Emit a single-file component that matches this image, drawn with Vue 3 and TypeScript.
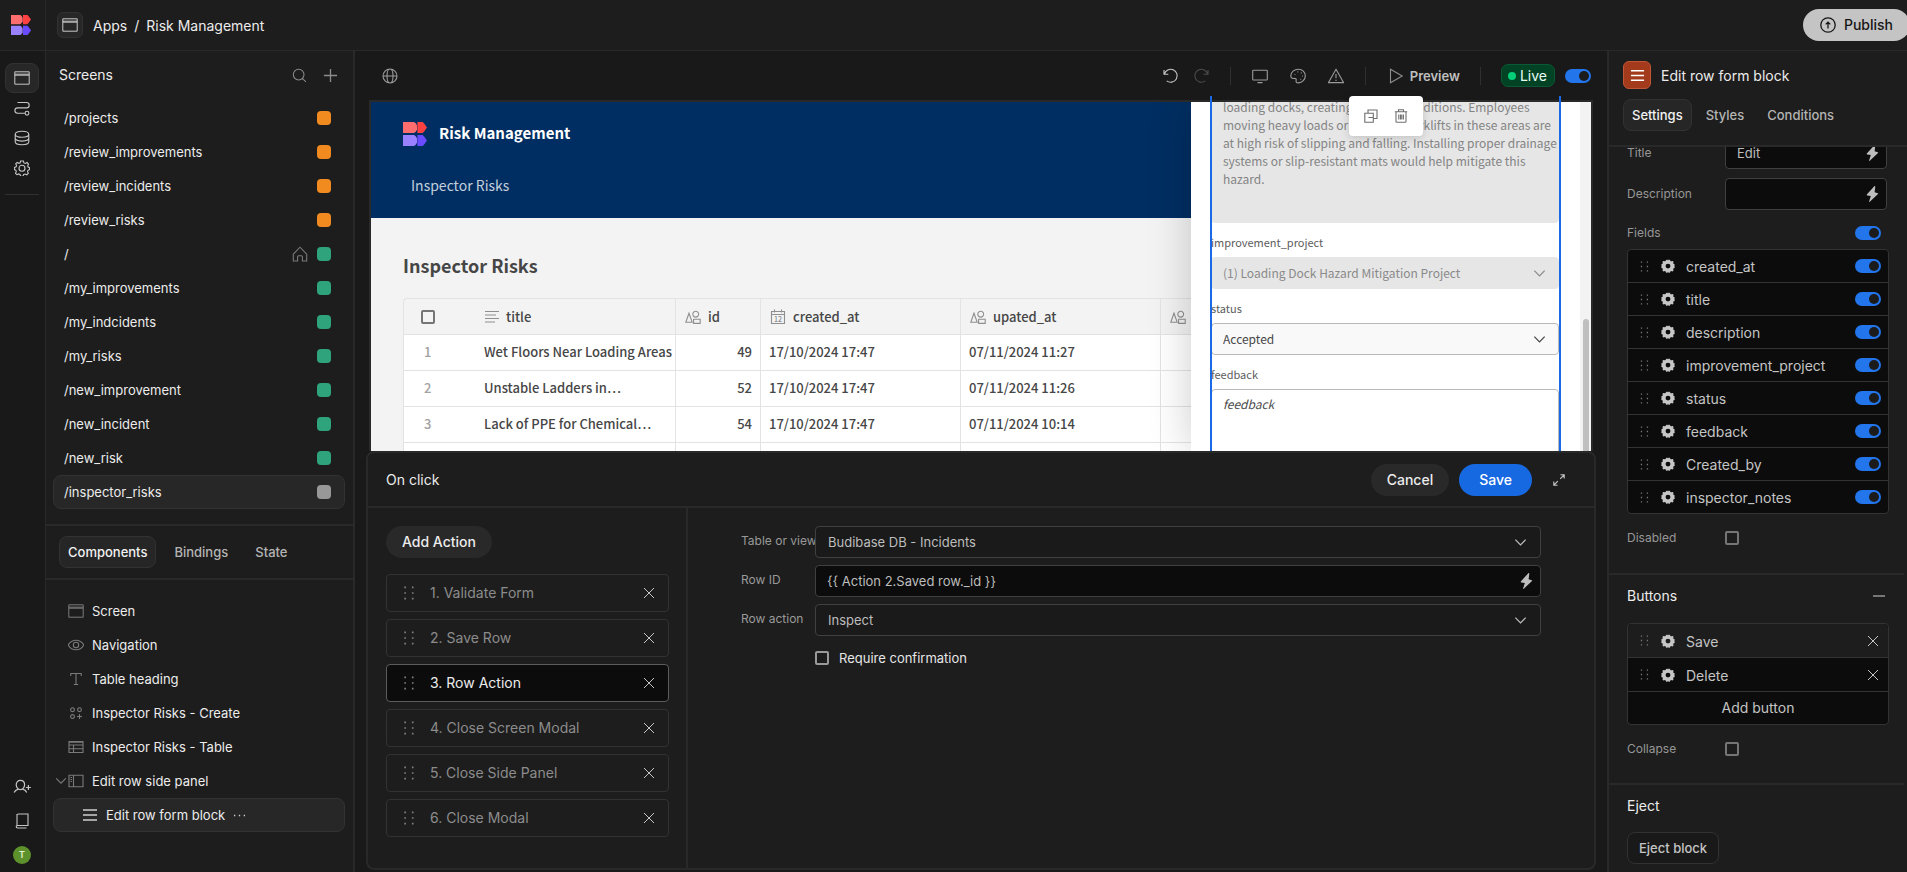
<script setup lang="ts">
import { h, ref, type FunctionalComponent } from 'vue'

interface Glyph {
  box: number
  d: string
  fill?: boolean
  weight?: number
}

const glyphs: Record<string, Glyph> = {
  window: { box: 16, d: 'M.8 1.8h14.4v12.4H.8zM.8 4.2h14.4M.8 5.2h14.4', weight: 1 },
  flow: { box: 16, d: 'M3.5 2.5h9a2.6 2.6 0 0 1 0 5.4H3.6a2.6 2.6 0 0 0 0 5.4h7.2M14.9 13.2a1.9 1.9 0 1 1-3.8 0a1.9 1.9 0 1 1 3.8 0' },
  data: { box: 16, d: 'M1.2 4.2c0-1.8 3-3 6.8-3s6.8 1.2 6.8 3-3 3-6.8 3-6.8-1.2-6.8-3zM1.2 4.2v3.9c0 1.8 3 3 6.8 3s6.8-1.2 6.8-3V4.2M1.2 8.1v3.7c0 1.8 3 3 6.8 3s6.8-1.2 6.8-3V8.1' },
  settings: { box: 16, d: 'M6.6 1h2.8l.5 1.9 1.5.6 1.7-1 1.4 1.5-.8 1.8.4 1.2 1.5.7v1.9l-1.6.7-.5 1.3.8 1.7-1.5 1.5-1.7-.8-1.4.5-.7 1.7H6.6l-.6-1.7-1.4-.6-1.7.8-1.4-1.4.8-1.8-.5-1.3L.4 9.6V7.5l1.7-.7.5-1.2-.9-1.8 1.5-1.4 1.7.9 1.3-.5zM11 8.2a3 3 0 1 1-6 0a3 3 0 1 1 6 0' },
  cog: { box: 16, fill: true, d: 'M6.3.8h1.2l.5.9.5-.9h1.6l.8 1.8h.8l1.6-.4 1 1-.3 1.7.2.5 1.5.8v1.3l-.9.5.9.6v1.4l-1.5.8-.3.7.4 1.6-1.1 1.1-1.7-.4-.6.2-.8 1.6H8.600L8 14.7l-.6.9H6l-.9-1.6-.6-.2-1.7.4-1.1-1.1.4-1.6-.3-.7L.3 10V8.600L1.2 8l-.9-.5V6.200l1.5-.8.2-.5L1.7 3.200l1-1 1.7.4.7-.2zM8 5.300a2.8 2.8 0 1 0 0 5.6a2.8 2.8 0 1 0 0-5.600z' },
  search: { box: 16, d: 'M12.8 7a5.700 5.700 0 1 1-11.400 0a5.700 5.700 0 1 1 11.400 0M11.200 11.200l3.600 3.600' },
  plus: { box: 16, d: 'M8 1v14M1 8h14', weight: 1.4 },
  home: { box: 16, d: 'M1.3 8.2 8 1.2l6.7 7V15h-4.300v-4.300a1 1 0 0 0-1-1H6.600a1 1 0 0 0-1 1V15H1.300z' },
  eye: { box: 16, d: 'M.2 8C2 4.800 4.800 3.200 8 3.200S14 4.800 15.800 8C14 11.200 11.200 12.800 8 12.800S2 11.200.2 8zM10.700 8a2.700 2.700 0 1 1-5.400 0a2.700 2.700 0 1 1 5.400 0' },
  heading: { box: 16, d: 'M2.8 5V2.500h10.400V5M8 2.500v11M5.800 13.500h4.400' },
  blocks: { box: 16, d: 'M6.400 4.700a1.900 1.900 0 1 1-3.800 0a1.900 1.900 0 1 1 3.800 0M13.400 4.700a1.900 1.900 0 1 1-3.800 0a1.900 1.900 0 1 1 3.800 0M6.400 11.500a1.900 1.900 0 1 1-3.800 0a1.900 1.900 0 1 1 3.800 0M11.500 9v5M9 11.500h5' },
  table: { box: 16, d: 'M1 2.500h14v11H1zM1 6h14M1 9.700h14M5.500 6v7.500M1 3.300h14' },
  sidePanel: { box: 16, d: 'M1 2.200h14v11.600H1zM5.500 2.200v11.600M2.500 4.500h1.500M2.500 6.500h1.500M2.500 8.500h1.500' },
  lines: { box: 16, d: 'M1 3h14M1 8h14M1 13h14', weight: 1.5 },
  chevron: { box: 16, d: 'M2.500 5 8 10.500 13.500 5', weight: 1.3 },
  dots: { box: 16, d: 'M1.200 7.200h1.600v1.600H1.200zM7.200 7.200h1.600v1.600H7.200zM13.200 7.200h1.600v1.600h-1.600z', fill: true },
  invite: { box: 18, d: 'M11.600 6.800c0 2.600-1.900 4.800-4.200 4.800S3.200 9.400 3.200 6.800 5 2.300 7.400 2.300s4.200 1.900 4.200 4.500zM5.300 11.200c-2.200.6-3.500 1.600-4.200 3.300M9.600 11.200c2.200.6 3.400 1.600 4.100 3.300M15.400 7v5M12.900 9.500h5', weight: 1.2 },
  book: { box: 16, d: 'M3 13V2.500A1.500 1.500 0 0 1 4.500 1H14v11.500H3.500a1.200 1.200 0 0 0 0 2.500h9M3 1v12' },
  globe: { box: 16, d: 'M15 8a7 7 0 1 1-14 0a7 7 0 1 1 14 0M11 8c0 4-1.300 7-3 7s-3-3-3-7 1.300-7 3-7 3 3 3 7M1 8h14' },
  undo: { box: 16, d: 'M1 2v4.200h4.300M1.400 6.100A6.500 6.500 0 1 1 3.700 12.900' },
  redo: { box: 16, d: 'M15 2v4.200h-4.300M14.600 6.100A6.500 6.500 0 1 0 12.300 12.900' },
  monitor: { box: 16, d: 'M1.500 2.200h13a.8.8 0 0 1 .8.800v8.200a.8.8 0 0 1-.8.800h-13a.8.8 0 0 1-.8-.8V3a.8.8 0 0 1 .8-.8zM5.500 14.600h5' },
  palette: { box: 16, d: 'M8.500 1.200C4.300 1.200.8 4.300.8 7.800c0 1.800 1.200 3 2.700 2.700 2-.4 3.300.4 2.600 2.200-.4 1.300.5 2.300 2.300 2.200 3.800-.2 6.900-3.300 6.900-7.100s-3-6.600-6.800-6.600zM5 6.200v.9M7.400 3.900h.9M10.800 4.900h.9M12.100 8h.9M10.300 11.200h.9' },
  warning: { box: 16, d: 'M8 1.300 15.500 14.600H.5zM8 6v4.300M8 11.800v1.300' },
  play: { box: 16, d: 'M2.500 1.300 14.200 8 2.500 14.700z' },
  publish: { box: 16, d: 'M15.200 8A7.200 7.200 0 1 1 .8 8a7.200 7.200 0 1 1 14.400 0M8 11.500v-6M5.700 7.400 8 5.100l2.300 2.300', weight: 1.3 },
  cross: { box: 12, d: 'M1 1l10 10M11 1 1 11', weight: 1 },
  bolt: { box: 16, fill: true, d: 'M9.300.3 1.800 8.600a.5.5 0 0 0 .4.800l3.600.6-1.700 5.400c-.1.500.4.700.7.300l8.200-7.600c.4-.4.2-.8-.3-.9L9.600 6.300l.7-5.500c0-.6-.6-.9-1-.5z' },
  expand: { box: 12, d: 'M7.500.8h3.700v3.700M11 1 7.200 4.800M4.500 11.200H.8V7.500M1 11l3.800-3.800' },
  textLines: { box: 14, d: 'M0 1.500h14M0 5h11M0 8.500h14M0 12h10', weight: 1.2 },
  shapes: { box: 16, d: 'M.8 13.200 4 4.200l3.200 9zM13.600 5.200a2.900 2.900 0 1 1-5.800 0a2.900 2.900 0 1 1 5.800 0M8.600 10.200h6.600v4.200H8.600z' },
  copy: { box: 14, d: 'M.8 4.200h8.500v9H.8zM4 4V1h9v8.500H9.500M4.500 8.500h5' },
  trash: { box: 14, d: 'M.8 2.800h12.400M4.500 2.800V.8h5v2M2 2.800v9.700c0 .5.300.8.8.8h8.400c.5 0 .8-.3.8-.8V2.800M4.800 5.500v5M6.500 5.500v5M7.800 5.500v5M9.400 5.500v5' },
  minus: { box: 12, d: 'M0 6h12', weight: 2 },
  handle: { box: 12, fill: true, d: 'M2 .5h1.400v1.400H2zM8.500.5h1.400v1.400H8.500zM2 5.300h1.400v1.400H2zM8.500 5.300h1.400v1.400H8.500zM2 10.100h1.400v1.400H2zM8.500 10.100h1.400v1.400H8.500z' },
}

const Icon: FunctionalComponent<{ name: string; size?: number }> = (props) => {
  const g = glyphs[props.name]
  const size = props.size ?? 16
  return h(
    'svg',
    { width: size, height: size, viewBox: `0 0 ${g.box} ${g.box}`, 'aria-hidden': 'true', class: 'icon' },
    [
      h('path', {
        d: g.d,
        fill: g.fill ? 'currentColor' : 'none',
        'fill-rule': 'evenodd',
        stroke: g.fill ? 'none' : 'currentColor',
        'stroke-width': g.fill ? 0 : (g.weight ?? 1.1),
      }),
    ],
  )
}
Icon.props = ['name', 'size']

const Logo: FunctionalComponent<{ size: number }> = (props) =>
  h('svg', { width: props.size, height: props.size, viewBox: '0 0 24 24', 'aria-hidden': 'true', class: 'icon' }, [
    h('path', { fill: '#ff6e6e', d: 'M0 0h10.800c1.600.4 2.400 1.600 3.200 3.600v4c-.8 1.800-1.600 3-3.200 3.400H0z' }),
    h('path', { fill: '#ff4141', d: 'M14.400 0h4.800c1.200.2 1.600 1 4.800 5.500-3.200 4.500-3.600 5.300-4.800 5.500h-4.800z' }),
    h('path', { fill: '#9981ff', d: 'M0 13h10.800c1.600.4 2.400 1.600 3.200 3.600v4c-.8 1.800-1.600 3-3.200 3.400H0z' }),
    h('path', { fill: '#6a4bff', d: 'M14.400 13h4.800c1.200.2 1.600 1 4.800 5.500-3.200 4.500-3.600 5.300-4.800 5.500h-4.800z' }),
  ])
Logo.props = ['size']

const screens = [
  { path: '/projects', role: 'orange' },
  { path: '/review_improvements', role: 'orange' },
  { path: '/review_incidents', role: 'orange' },
  { path: '/review_risks', role: 'orange' },
  { path: '/', role: 'green', home: true },
  { path: '/my_improvements', role: 'green' },
  { path: '/my_indcidents', role: 'green' },
  { path: '/my_risks', role: 'green' },
  { path: '/new_improvement', role: 'green' },
  { path: '/new_incident', role: 'green' },
  { path: '/new_risk', role: 'green' },
  { path: '/inspector_risks', role: 'grey' },
]
const currentScreen = ref('/inspector_risks')

const components = [
  { name: 'Screen', icon: 'window' },
  { name: 'Navigation', icon: 'eye' },
  { name: 'Table heading', icon: 'heading' },
  { name: 'Inspector Risks - Create', icon: 'blocks' },
  { name: 'Inspector Risks - Table', icon: 'table' },
  { name: 'Edit row side panel', icon: 'sidePanel', open: true },
  { name: 'Edit row form block', icon: 'lines', selected: true },
]

const rows = [
  { title: 'Wet Floors Near Loading Areas', id: '49', created: '17/10/2024 17:47', updated: '07/11/2024 11:27' },
  { title: 'Unstable Ladders in…', id: '52', created: '17/10/2024 17:47', updated: '07/11/2024 11:26' },
  { title: 'Lack of PPE for Chemical…', id: '54', created: '17/10/2024 17:47', updated: '07/11/2024 10:14' },
  { title: '', id: '', created: '', updated: '' },
]

const hazard = [
  'loading docks, creating slippery conditions. Employees',
  'moving heavy loads or operating forklifts in these areas are',
  'at high risk of slipping and falling. Installing proper drainage',
  'systems or slip-resistant mats would help mitigate this',
  'hazard.',
].join('\n')

const actions = ['Validate Form', 'Save Row', 'Row Action', 'Close Screen Modal', 'Close Side Panel', 'Close Modal']
const currentAction = ref(2)

const fields = ['created_at', 'title', 'description', 'improvement_project', 'status', 'feedback', 'Created_by', 'inspector_notes']
const formButtons = ['Save', 'Delete']
</script>

<template>
  <div class="builder">
    <header class="topbar">
      <a class="brand" href="#" aria-label="Home"><Logo :size="20" /></a>
      <div class="crumbs">
        <button class="app-icon" aria-label="App"><Icon name="window" /></button>
        <a href="#">Apps</a><span>/</span><a href="#">Risk Management</a>
      </div>
      <button class="publish"><Icon name="publish" /> Publish</button>
    </header>

    <nav class="rail" aria-label="Sections">
      <button class="active" aria-label="Design"><Icon name="window" /></button>
      <button aria-label="Automations"><Icon name="flow" /></button>
      <button aria-label="Data"><Icon name="data" /></button>
      <button aria-label="Settings"><Icon name="settings" /></button>
      <div class="rail-line"></div>
      <div class="rail-end">
        <button aria-label="Invite"><Icon name="invite" :size="18" /></button>
        <button aria-label="Docs"><Icon name="book" /></button>
        <button class="avatar" aria-label="Account">T</button>
      </div>
    </nav>

    <aside class="left">
      <section class="screens">
        <div class="panel-head">
          <h2>Screens</h2>
          <button aria-label="Search screens"><Icon name="search" :size="15" /></button>
          <button aria-label="Add screen"><Icon name="plus" :size="15" /></button>
        </div>
        <ul>
          <li v-for="s in screens" :key="s.path">
            <button class="nav-row" :class="{ selected: s.path === currentScreen }" @click="currentScreen = s.path">
              <span class="grow">{{ s.path }}</span>
              <Icon v-if="s.home" name="home" class="dim" />
              <span class="role" :class="s.role"></span>
            </button>
          </li>
        </ul>
      </section>
      <div class="tabs tree-tabs">
        <button class="tab on">Components</button>
        <button class="tab">Bindings</button>
        <button class="tab">State</button>
      </div>
      <ul class="tree">
        <li v-for="c in components" :key="c.name">
          <button class="nav-row node" :class="{ selected: c.selected }">
            <span class="twist"><Icon v-if="c.open" name="chevron" :size="14" /></span>
            <Icon :name="c.icon" />
            <span>{{ c.name }}</span>
            <Icon v-if="c.selected" name="dots" :size="13" />
          </button>
        </li>
      </ul>
    </aside>

    <main class="center">
      <div class="toolbar">
        <Icon name="globe" />
        <span class="grow"></span>
        <div class="group pair">
          <button aria-label="Undo" class="strong"><Icon name="undo" /></button>
          <button aria-label="Redo" class="faint"><Icon name="redo" /></button>
        </div>
        <div class="group devices">
          <button aria-label="Device"><Icon name="monitor" /></button>
          <button aria-label="Theme"><Icon name="palette" /></button>
          <button aria-label="Errors"><Icon name="warning" /></button>
        </div>
        <div class="group"><button class="preview-btn"><Icon name="play" /><span>Preview</span></button></div>
        <span class="live"><i></i>Live</span>
        <input class="switch" type="checkbox" checked aria-label="Live" />
      </div>

      <div class="canvas">
        <div class="app">
          <header class="app-head">
            <div class="app-title"><Logo :size="24" /><strong>Risk Management</strong></div>
            <a href="#">Inspector Risks</a>
          </header>
          <div class="app-body">
            <h1>Inspector Risks</h1>
            <table>
              <colgroup>
                <col class="c-num" /><col class="c-wide" /><col class="c-id" /><col class="c-wide" /><col class="c-wide" /><col />
              </colgroup>
              <thead>
                <tr>
                  <th class="gutter"><input type="checkbox" class="box" aria-label="Select all rows" /></th>
                  <th><span class="th"><Icon name="textLines" :size="14" />title</span></th>
                  <th><span class="th"><Icon name="shapes" />id</span></th>
                  <th>
                    <span class="th">
                      <svg class="icon" width="16" height="16" viewBox="0 0 16 16" aria-hidden="true">
                        <path d="M1.5 2.5h13v12h-13zM1.5 5.500h13M4.500.5v3M11.500.5v3" fill="none" stroke="currentColor" stroke-width="1.1" />
                        <text x="8" y="12.800" font-size="7" text-anchor="middle" fill="currentColor">12</text>
                      </svg>
                      created_at
                    </span>
                  </th>
                  <th><span class="th"><Icon name="shapes" />upated_at</span></th>
                  <th><span class="th"><Icon name="shapes" /></span></th>
                </tr>
              </thead>
              <tbody>
                <tr v-for="(r, i) in rows" :key="i">
                  <td class="gutter">{{ r.title ? i + 1 : '' }}</td>
                  <td>{{ r.title }}</td>
                  <td class="num">{{ r.id }}</td>
                  <td>{{ r.created }}</td>
                  <td>{{ r.updated }}</td>
                  <td></td>
                </tr>
              </tbody>
            </table>
          </div>
          <aside class="side">
            <form class="side-form" @submit.prevent>
              <textarea class="hazard" disabled aria-label="description" :value="hazard"></textarea>
              <label for="f-project">improvement_project</label>
              <div class="pick off">
                <select id="f-project" disabled><option>(1) Loading Dock Hazard Mitigation Project</option></select>
                <Icon name="chevron" :size="15" />
              </div>
              <label for="f-status">status</label>
              <div class="pick">
                <select id="f-status"><option>Accepted</option></select>
                <Icon name="chevron" :size="15" />
              </div>
              <label for="f-feedback">feedback</label>
              <textarea id="f-feedback" class="feedback" placeholder="feedback"></textarea>
            </form>
            <div class="track"><div class="thumb"></div></div>
          </aside>
        </div>
        <div class="selection">
          <div class="bubble">
            <button aria-label="Duplicate"><Icon name="copy" :size="14" /></button>
            <button aria-label="Delete"><Icon name="trash" :size="14" /></button>
          </div>
        </div>
      </div>

      <section class="drawer">
        <div class="drawer-head">
          <h2>On click</h2>
          <button class="pill">Cancel</button>
          <button class="pill primary">Save</button>
          <button class="bare" aria-label="Expand"><Icon name="expand" :size="12" /></button>
        </div>
        <div class="drawer-body">
          <div class="actions">
            <button class="pill">Add Action</button>
            <ol>
              <li v-for="(a, i) in actions" :key="a" :class="{ current: i === currentAction }">
                <Icon name="handle" :size="14" />
                <button class="name" @click="currentAction = i">{{ i + 1 }}. {{ a }}</button>
                <button class="bare" :aria-label="`Remove ${a}`"><Icon name="cross" :size="12" /></button>
              </li>
            </ol>
          </div>
          <div class="config">
            <div class="config-grid">
              <label for="a-table">Table or view</label>
              <div class="field">
                <select id="a-table"><option>Budibase DB - Incidents</option></select>
                <Icon name="chevron" :size="15" />
              </div>
              <label for="a-row">Row ID</label>
              <div class="field deep">
                <input id="a-row" type="text" value="{{ Action 2.Saved row._id }}" />
                <Icon name="bolt" />
              </div>
              <label for="a-action">Row action</label>
              <div class="field">
                <select id="a-action"><option>Inspect</option></select>
                <Icon name="chevron" :size="15" />
              </div>
              <label class="confirm"><input type="checkbox" class="box" />Require confirmation</label>
            </div>
          </div>
        </div>
      </section>
    </main>

    <aside class="right">
      <div class="right-head">
        <div class="right-title">
          <span class="badge"><Icon name="lines" :size="15" /></span>
          <h2>Edit row form block</h2>
        </div>
        <div class="tabs">
          <button class="tab on">Settings</button>
          <button class="tab">Styles</button>
          <button class="tab">Conditions</button>
        </div>
      </div>
      <div class="right-scroll">
        <section class="group-main">
          <div class="prop">
            <label for="p-title">Title</label>
            <div class="field deep"><input id="p-title" type="text" value="Edit" /><Icon name="bolt" /></div>
          </div>
          <div class="prop">
            <label for="p-desc">Description</label>
            <div class="field deep"><input id="p-desc" type="text" /><Icon name="bolt" /></div>
          </div>
          <div class="fields-head">
            <label for="p-fields">Fields</label>
            <input id="p-fields" class="switch" type="checkbox" checked />
          </div>
          <ul class="stack">
            <li v-for="f in fields" :key="f">
              <Icon name="handle" :size="11" /><Icon name="cog" :size="14" />
              <label :for="`fld-${f}`">{{ f }}</label>
              <input :id="`fld-${f}`" class="switch" type="checkbox" checked />
            </li>
          </ul>
          <div class="prop check">
            <label for="p-disabled">Disabled</label>
            <input id="p-disabled" type="checkbox" class="box" />
          </div>
        </section>
        <section class="group-buttons">
          <div class="sub-head"><h3>Buttons</h3><button class="bare" aria-label="Collapse section"><Icon name="minus" :size="12" /></button></div>
          <ul class="stack tall">
            <li v-for="b in formButtons" :key="b">
              <Icon name="handle" :size="11" /><Icon name="cog" :size="14" />
              <span class="grow">{{ b }}</span>
              <button class="bare" :aria-label="`Remove ${b}`"><Icon name="cross" :size="12" /></button>
            </li>
            <li class="add"><button>Add button</button></li>
          </ul>
          <div class="prop check">
            <label for="p-collapse">Collapse</label>
            <input id="p-collapse" type="checkbox" class="box" />
          </div>
        </section>
        <section class="group-eject">
          <h3>Eject</h3>
          <button class="outline">Eject block</button>
        </section>
      </div>
    </aside>
  </div>
</template>

<style>
html,
body {
  margin: 0;
  background: #191919;
}
</style>

<style scoped>
.builder {
  --line: #292929;
  --panel: #1d1d1d;
  --text: #ececec;
  display: grid;
  grid-template-columns: 46px 309px minmax(0, 1fr) 300px;
  grid-template-rows: 51px minmax(0, 1fr);
  height: 100vh;
  overflow: hidden;
  background: #191919;
  color: var(--text);
  font-family: Inter, "Liberation Sans", sans-serif;
  font-size: 14px;
  line-height: 18px;
}
.builder * { box-sizing: border-box; }
.builder :deep(.icon) { display: block; flex: none; }
button, input, select, textarea { font: inherit; color: inherit; margin: 0; }
button { padding: 0; border: 0; background: none; cursor: pointer; }
a { color: inherit; text-decoration: none; }
ul, ol { list-style: none; margin: 0; padding: 0; }
h1, h2, h3 { margin: 0; font-size: 14px; font-weight: 400; }
.grow { flex: 1; }
.bare { color: #c6c6c6; }

.topbar {
  grid-column: 1 / -1;
  display: flex;
  align-items: center;
  background: var(--panel);
  border-bottom: 1px solid var(--line);
}
.brand {
  display: flex;
  align-items: center;
  width: 46px;
  height: 50px;
  padding-left: 11px;
  border-right: 1px solid var(--line);
}
.crumbs { display: flex; align-items: center; flex: 1; padding-left: 11px; gap: 7px; }
.crumbs a, .crumbs span { padding-top: 2px; }
.app-icon {
  display: grid;
  place-items: center;
  width: 26px;
  height: 26px;
  margin-right: 3px;
  border: 1px solid #323232;
  border-radius: 6px;
  background: #272727;
  color: #c9c9c9;
}
.publish {
  display: flex;
  align-items: center;
  gap: 8px;
  height: 32px;
  margin-right: -3px;
  padding: 0 17px;
  border-radius: 16px;
  background: #c4c4c4;
  color: #161616;
  font-weight: 500;
}

.rail {
  display: flex;
  flex-direction: column;
  align-items: center;
  padding: 12px 6px 8px 5px;
  border-right: 1px solid var(--line);
  color: #c6c6c6;
}
.rail button { display: grid; place-items: center; width: 34px; height: 30px; border: 1px solid transparent; border-radius: 8px; }
.rail button.active { background: #272727; border-color: #323232; }
.rail-line { width: 34px; margin-top: 11px; border-top: 1px solid #303030; }
.rail-end { display: flex; flex-direction: column; align-items: center; gap: 4px; margin-top: auto; }
.rail .avatar { width: 18px; height: 18px; margin: 6px 0 0; border-radius: 50%; background: #5d912c; color: #e4f0d4; font-size: 9px; line-height: 16px; font-weight: 600; }

.left {
  display: flex;
  flex-direction: column;
  background: var(--panel);
  border-right: 2px solid var(--line);
}
.panel-head { display: flex; align-items: center; gap: 16px; height: 50px; padding: 0 15px 2px 13px; color: #8c8c8c; }
.panel-head h2 { flex: 1; color: var(--text); }
.screens { padding-bottom: 15px; border-bottom: 2px solid var(--line); }
.nav-row {
  display: flex;
  align-items: center;
  gap: 9px;
  width: 292px;
  height: 34px;
  margin-left: 7px;
  padding: 0 13px 0 10px;
  border: 1px solid transparent;
  border-radius: 8px;
  font-size: 13px;
  text-align: left;
}
.nav-row.selected { background: #272727; border-color: #323232; }
.dim { color: #7a7a7a; }
.role { width: 14px; height: 14px; border-radius: 4px; }
.orange { background: #f18b20; }
.green { background: #2fa37b; }
.grey { background: #989898; }

.tabs { display: flex; gap: 5px; }
.tab { height: 32px; padding: 0 8px; border: 1px solid transparent; border-radius: 8px; color: #b4b4b4; font-size: 13px; font-weight: 500; }
.tab.on { background: #262626; border-color: #323232; color: #f2f2f2; }
.tree-tabs { gap: 9px; padding: 10px 13px; border-bottom: 2px solid var(--line); }
.tree { padding-top: 14px; }
.node { gap: 8px; padding-left: 0; }
.node > :deep(.icon) { color: #7a7a7a; }
.node.selected { padding-left: 14px; }
.node.selected > :deep(.icon) { color: #d0d0d0; }
.twist { width: 14px; margin-right: -8px; color: #7a7a7a; }

.center { display: flex; flex-direction: column; min-width: 0; padding: 0 11px 2px; }
.toolbar { display: flex; align-items: center; height: 49px; flex: none; padding: 0 5px 0 16px; color: #9b9b9b; }
.group { display: flex; align-items: center; height: 18px; border-right: 1px solid #303030; }
.pair { gap: 14px; padding-right: 21px; }
.devices { gap: 22px; padding: 0 21px; }
.strong { color: #c8c8c8; }
.faint { color: #4c4c4c; }
.preview-btn { display: flex; align-items: center; gap: 6px; padding: 0 20px 0 22px; color: #8f8f8f; font-size: 13px; font-weight: 600; }
.preview-btn span { color: #c0c0c0; }
.live {
  display: flex;
  align-items: center;
  gap: 4px;
  height: 23px;
  margin: 0 10px 0 20px;
  padding: 0 7px 0 6px;
  border: 1px solid #0b5a35;
  border-radius: 7px;
  background: #024225;
  color: #eafff4;
}
.live i { width: 8px; height: 8px; border-radius: 50%; background: #05ce78; }
.switch {
  appearance: none;
  position: relative;
  flex: none;
  width: 26px;
  height: 14px;
  border-radius: 7px;
  background: #2375ec;
}
.switch::after {
  content: "";
  position: absolute;
  top: 2px;
  right: 2px;
  width: 10px;
  height: 10px;
  border-radius: 50%;
  background: #1b1b1b;
}
.box { appearance: none; display: block; width: 14px; height: 14px; flex: none; border: 2px solid #757575; border-radius: 2px; }

.canvas { position: relative; flex: 1; min-height: 0; margin: 0 3px; border: 2px solid var(--line); border-bottom: 0; }
.app {
  position: relative;
  height: 100%;
  overflow: hidden;
  background: #f3f3f3;
  color: #464646;
  font-family: "Noto Sans CJK SC", "Noto Sans", sans-serif;
  font-size: 13px;
}
.app-head { height: 116px; padding: 20px 32px; background: #002e62; color: #fff; }
.app-title { display: flex; align-items: center; gap: 12px; font-size: 15px; height: 24px; }
.app-title strong { padding-bottom: 2px; }
.app-head a { display: block; margin-top: 29px; padding: 0 8px; font-size: 14px; line-height: 20px; color: #c3cfdc; }
.app-body { padding: 32px; }
h1 { font-size: 18px; font-weight: 600; line-height: 30px; margin-bottom: 18px; }
table {
  width: 100%;
  table-layout: fixed;
  border-collapse: separate;
  border-spacing: 0;
  border: 1px solid #e3e3e3;
  border-width: 1px 0 0 1px;
  border-radius: 4px 0 0 0;
}
.c-num { width: 72px; }
.c-wide { width: 200px; }
.c-id { width: 85px; }
th, td { height: 36px; padding: 0 8px; border: 0 solid #e3e3e3; border-width: 0 1px 1px 0; font-weight: 500; text-align: left; white-space: nowrap; }
td { padding-bottom: 2px; background: #fff; }
.gutter { border-right: 0; padding-left: 17px; color: #a3a3a3; }
td.gutter { padding-left: 20px; }
.num { text-align: right; }
.th { display: flex; align-items: center; gap: 7px; padding-left: 1px; }
.th :deep(.icon), .th .icon { color: #8f8f8f; }

.side {
  position: absolute;
  top: 0;
  right: 0;
  bottom: 0;
  display: flex;
  justify-content: space-between;
  width: 400px;
  background: #fff;
  box-shadow: 0 0 40px 0 rgba(0, 0, 0, 0.2);
}
.side-form { width: 348px; margin: -13px 0 0 20px; }
.side-form label { display: block; height: 34px; padding-top: 10px; font-size: 11px; line-height: 18px; color: #5c5c5c; }
.side-form textarea { display: block; width: 100%; resize: none; overflow: hidden; padding: 8px 11px; border-radius: 4px; line-height: 18px; font-size: 12px; }
.side-form .hazard { height: 134px; border: 1px solid #e6e6e6; background: #e6e6e6; color: #848484; white-space: pre; }
.feedback { height: 100px; border: 1px solid #b9b9b9; background: #fff; }
.side-form .feedback { padding-top: 5px; }
.feedback::placeholder { color: #4a4a4a; opacity: 1; font-style: italic; }
.pick { position: relative; display: flex; align-items: center; height: 32px; padding-right: 11px; border: 1px solid #b9b9b9; border-radius: 4px; background: #f9f9f9; }
.pick.off { border-color: #e6e6e6; background: #e6e6e6; color: #8a8a8a; }
.pick select { appearance: none; flex: 1; min-width: 0; height: 30px; padding: 0 11px 1px; border: 0; background: none; opacity: 1; font-size: 12px; }
.track { width: 11px; padding-left: 3px; background: #f3f3f3; }
.thumb { width: 6px; height: 200px; margin-top: 217px; border-radius: 3px; background: #bfbfbf; }
.selection { position: absolute; top: -6px; right: 30px; bottom: 0; width: 351px; border: 2px solid #1a6ae6; border-width: 0 2px; pointer-events: none; }
.bubble {
  display: flex;
  align-items: center;
  justify-content: center;
  gap: 16px;
  width: 74px;
  height: 40px;
  margin: 0 auto;
  border-radius: 4px;
  background: #fff;
  color: #6e6e6e;
  box-shadow: 0 2px 8px rgba(0, 0, 0, 0.16);
}

.drawer { flex: none; border: 2px solid var(--line); border-radius: 8px; background: var(--panel); }
.drawer-head { display: flex; align-items: center; height: 55px; padding: 0 29px 0 18px; border-bottom: 2px solid var(--line); }
.drawer-head h2 { flex: 1; }
.pill { height: 32px; padding: 0 16px; border-radius: 16px; background: #292929; font-weight: 500; }
.primary { margin: 0 21px 0 10px; padding: 0 20px; background: #1769e2; color: #fff; }
.drawer-body { display: grid; grid-template-columns: 320px 1fr; }
.actions { padding: 18px 17px 31px 18px; border-right: 2px solid var(--line); }
.actions ol { display: grid; gap: 7px; margin-top: 16px; }
.actions li { display: flex; align-items: center; height: 38px; padding: 0 13px 0 15px; border: 1px solid #323232; border-radius: 4px; color: #808080; }
.actions .name { flex: 1; padding-left: 14px; text-align: left; color: #8c8c8c; }
.actions .current { background: #0c0c0c; border-color: #5c5c5c; }
.actions .current .name { color: #ececec; }
.config { padding: 18px 53px; }
.config-grid { display: grid; grid-template-columns: 74px minmax(0, 1fr); row-gap: 7px; max-width: 800px; margin: 0 auto; }
.config-grid > label { padding-top: 6px; font-size: 12px; color: #999; white-space: nowrap; }
.config-grid > .confirm { grid-column: 2; display: flex; align-items: center; gap: 10px; padding-top: 6px; font-size: 13px; color: #e6e6e6; }
.confirm .box { border-color: #9a9a9a; }
.field { display: flex; align-items: center; height: 32px; border: 1px solid #404040; border-radius: 4px; background: #1a1a1a; color: #bdbdbd; font-size: 13px; }
.field.deep { background: #0c0c0c; }
.field select, .field input { appearance: none; flex: 1; min-width: 0; height: 30px; padding: 0 12px; border: 0; background: none; outline: 0; }
.field select + :deep(.icon) { margin-right: 12px; }
.field input { padding: 0 11px; }
.field input + :deep(.icon) { margin-right: 5px; }

.right { display: flex; flex-direction: column; min-height: 0; background: var(--panel); border-left: 2px solid var(--line); }
.right-head { padding: 10px 14px 14px; border-bottom: 2px solid var(--line); }
.right-title { display: flex; align-items: center; gap: 10px; margin-bottom: 10px; }
.right-title h2 { padding-top: 2px; }
.badge { display: grid; place-items: center; width: 28px; height: 28px; border: 1px solid #bf5637; border-radius: 6px; background: #a33a1c; color: #fff; }
.right-scroll { flex: 1; min-height: 0; overflow: hidden; margin-right: 3px; color: #c4c4c4; }
.right-scroll section { padding: 0 15px 0 18px; border-bottom: 2px solid var(--line); }
.right-scroll .group-main { margin-top: -10px; padding-bottom: 26px; }
.prop { display: grid; grid-template-columns: 98px minmax(0, 1fr); align-items: center; margin: 0 2px 9px 0; }
.prop label, .fields-head label { font-size: 12px; color: #979797; }
.fields-head { display: flex; align-items: center; justify-content: space-between; padding: 5px 8px 7px 0; }
.stack { border: 1px solid #333; border-radius: 4px; background: #0c0c0c; }
.stack li { display: flex; align-items: center; height: 33px; padding: 0 7px 0 11px; border-top: 1px solid #333; }
.stack li:first-child { border-top: 0; height: 32px; border-radius: 4px 4px 0 0; }
.stack li > :deep(.icon) { color: #777; }
.stack li > :deep(.icon + .icon) { margin: 0 11px; color: #c6c6c6; }
.stack label, .stack .grow { flex: 1; padding-top: 2px; }
.tall li { height: 34px; }
.tall li:first-child { height: 33px; background: #1d1d1d; }
.tall li > .bare { margin-right: 2px; }
.stack .add { height: 33px; justify-content: center; padding: 0; }
.add button { width: 100%; height: 32px; }
.prop.check { margin: 15px 0 0; }
.sub-head { display: flex; align-items: center; justify-content: space-between; height: 48px; padding: 0 4px 6px 0; }
.sub-head .bare { color: #777; }
h3 { color: #ececec; }
.right-scroll .group-buttons { padding-bottom: 25px; }
.right-scroll .group-eject { padding-top: 12px; border: 0; }
.outline { height: 32px; margin-top: 17px; padding: 0 11px; border: 1px solid #323232; border-radius: 8px; background: #191919; color: #c4c4c4; font-size: 13px; font-weight: 500; }
</style>
